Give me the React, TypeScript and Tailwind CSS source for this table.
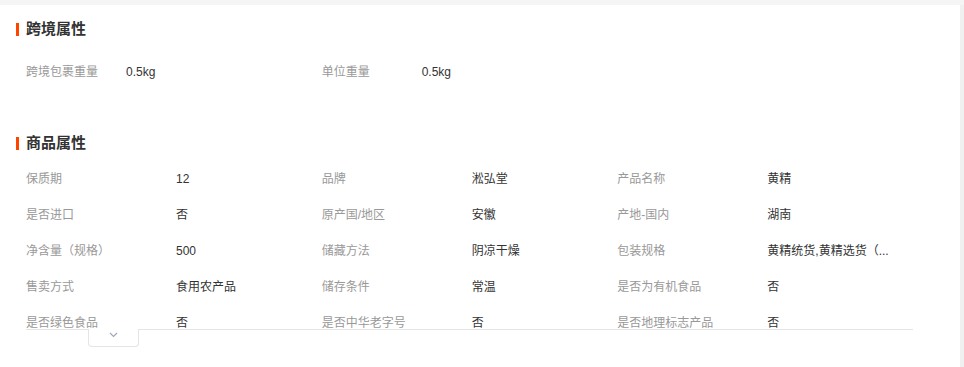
const FONT = "font-['Liberation_Sans','Noto_Sans_CJK_SC',sans-serif]";

const CROSS_BORDER = [
  { label: "跨境包裹重量", value: "0.5kg" },
  { label: "单位重量", value: "0.5kg" },
];

const PRODUCT = [
  { label: "保质期", value: "12" },
  { label: "品牌", value: "淞弘堂" },
  { label: "产品名称", value: "黄精" },
  { label: "是否进口", value: "否" },
  { label: "原产国/地区", value: "安徽" },
  { label: "产地-国内", value: "湖南" },
  { label: "净含量（规格）", value: "500" },
  { label: "储藏方法", value: "阴凉干燥" },
  { label: "包装规格", value: "黄精统货,黄精选货（..." },
  { label: "售卖方式", value: "食用农产品" },
  { label: "储存条件", value: "常温" },
  { label: "是否为有机食品", value: "否" },
  { label: "是否绿色食品", value: "否" },
  { label: "是否中华老字号", value: "否" },
  { label: "是否地理标志产品", value: "否" },
];

function SectionTitle({ title }: { title: string }) {
  return (
    <div className="flex h-[20px] items-center">
      <span className="h-[13px] w-[3px] bg-[#ff4400]" />
      <h3 className="ml-[7px] text-[15px] font-bold leading-[20px] text-[#333]">{title}</h3>
    </div>
  );
}

function Attr({ label, value, valueOffset }: { label: string; value: string; valueOffset: string }) {
  return (
    <div className="flex h-[36px] items-center pt-[2px] text-[12px] leading-[16px]">
      <span className={`${valueOffset} shrink-0 whitespace-nowrap text-[#999]`}>{label}</span>
      <span className="whitespace-nowrap text-[#333]">{value}</span>
    </div>
  );
}

export default function App() {
  return (
    <div className={`${FONT} flex h-[367px] w-[964px] flex-col bg-[#f5f5f5]`}>
      <div className="h-[5px]" />
      <div className="flex flex-1">
        <div className="w-[960px] bg-white px-[16px]">
          <div className="mt-[14px]">
            <SectionTitle title="跨境属性" />
          </div>
          <div className="mt-[14px] grid w-[897px] grid-cols-3 pl-[10px]">
            {CROSS_BORDER.map((a) => (
              <Attr key={a.label} label={a.label} value={a.value} valueOffset="w-[100px]" />
            ))}
          </div>

          <div className="mt-[44px]">
            <SectionTitle title="商品属性" />
          </div>
          <div className="ml-[10px] mt-[7px] w-[887px]">
            <div className="grid h-[169px] grid-cols-3 overflow-hidden">
              {PRODUCT.map((a) => (
                <Attr key={a.label} label={a.label} value={a.value} valueOffset="w-[150px]" />
              ))}
            </div>
            {/* expand toggle sitting on the fold line */}
            <div className="relative border-t border-[#e5e5e5]">
              <button className="absolute left-[62px] top-[-1px] flex h-[18px] w-[51px] items-start justify-center rounded-b-[4px] border border-t-0 border-[#e5e5e5] bg-white pt-[3px]">
                <svg width="9" height="6" viewBox="0 0 9 6" fill="none">
                  <path d="M1 1l3.5 3.5L8 1" stroke="#a0a8b8" strokeWidth="1.2" />
                </svg>
              </button>
            </div>
          </div>
        </div>
        <div className="w-[4px] bg-[#f0f0f0]" />
      </div>
    </div>
  );
}
